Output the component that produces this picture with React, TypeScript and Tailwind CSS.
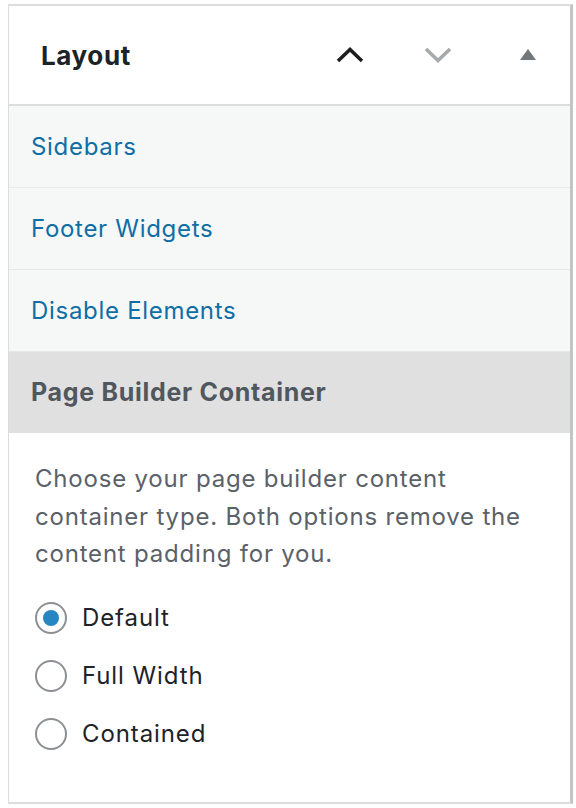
import React, { useState } from 'react';

const sections = ['Sidebars', 'Footer Widgets', 'Disable Elements'];

const options = [
  { id: 'default', label: 'Default' },
  { id: 'full-width', label: 'Full Width' },
  { id: 'contained', label: 'Contained' },
];

function ChevronUp() {
  return (
    <svg width="28" height="18" viewBox="0 0 28 18" fill="none">
      <path d="M2 15L14 3.5L26 15" stroke="#1e1e1e" strokeWidth="3.6" />
    </svg>
  );
}

function ChevronDown() {
  return (
    <svg width="28" height="18" viewBox="0 0 28 18" fill="none">
      <path d="M2 3L14 14.5L26 3" stroke="#a7aaad" strokeWidth="3.6" />
    </svg>
  );
}

function Triangle() {
  return (
    <svg width="16" height="12" viewBox="0 0 16 12">
      <path d="M8 0L16 11H0Z" fill="#72777c" />
    </svg>
  );
}

export default function App() {
  const [container, setContainer] = useState('default');

  return (
    <div className="min-h-[808px] bg-white pt-[4px] font-['Inter',sans-serif]">
      <div className="ml-[8px] w-[565px] border-t-2 border-b-2 border-l border-r-[3px] border-[#dcdcde] border-r-[#c3c4c7]">
        {/* panel header */}
        <div className="flex h-[100px] items-center border-b-2 border-[#dcdcde] pl-[32px]">
          <h2 className="flex-1 text-[26px] font-bold tracking-[0.6px] text-[#1d2327]">Layout</h2>
          <div className="flex items-center">
            <button className="flex w-[88px] justify-center"><ChevronUp /></button>
            <button className="flex w-[88px] justify-center"><ChevronDown /></button>
            <button className="flex w-[88px] justify-center pl-[4px]"><Triangle /></button>
          </div>
        </div>

        {sections.map((name) => (
          <div
            key={name}
            className="flex h-[82px] items-center border-b border-[#e8e8e8] bg-[#f6f7f7] pl-[22px] text-[24px] tracking-[0.7px] text-[#0e6ea5]"
          >
            {name}
          </div>
        ))}

        <div className="flex h-[81px] items-center bg-[#e0e0e0] pl-[22px] text-[25px] font-bold tracking-[0.7px] text-[#50575e]">
          Page Builder Container
        </div>

        <div className="px-[26px] pt-[27px] pb-[50px]">
          <p className="text-[24px] leading-[37.5px] tracking-[0.8px] text-[#5b6168]">
            Choose your page builder content container type. Both options remove the content padding for you.
          </p>
          <div className="mt-[27px] flex flex-col gap-[22px]">
            {options.map((opt) => (
              <label key={opt.id} className="flex items-center gap-[15px] text-[24px] tracking-[0.9px] text-[#1d2327]">
                <span
                  onClick={() => setContainer(opt.id)}
                  className="flex h-[32px] w-[32px] items-center justify-center rounded-full border-2 border-[#8c8f94] bg-white"
                >
                  {container === opt.id && <span className="h-[16px] w-[16px] rounded-full bg-[#2786c2]" />}
                </span>
                {opt.label}
              </label>
            ))}
          </div>
        </div>
      </div>
    </div>
  );
}
